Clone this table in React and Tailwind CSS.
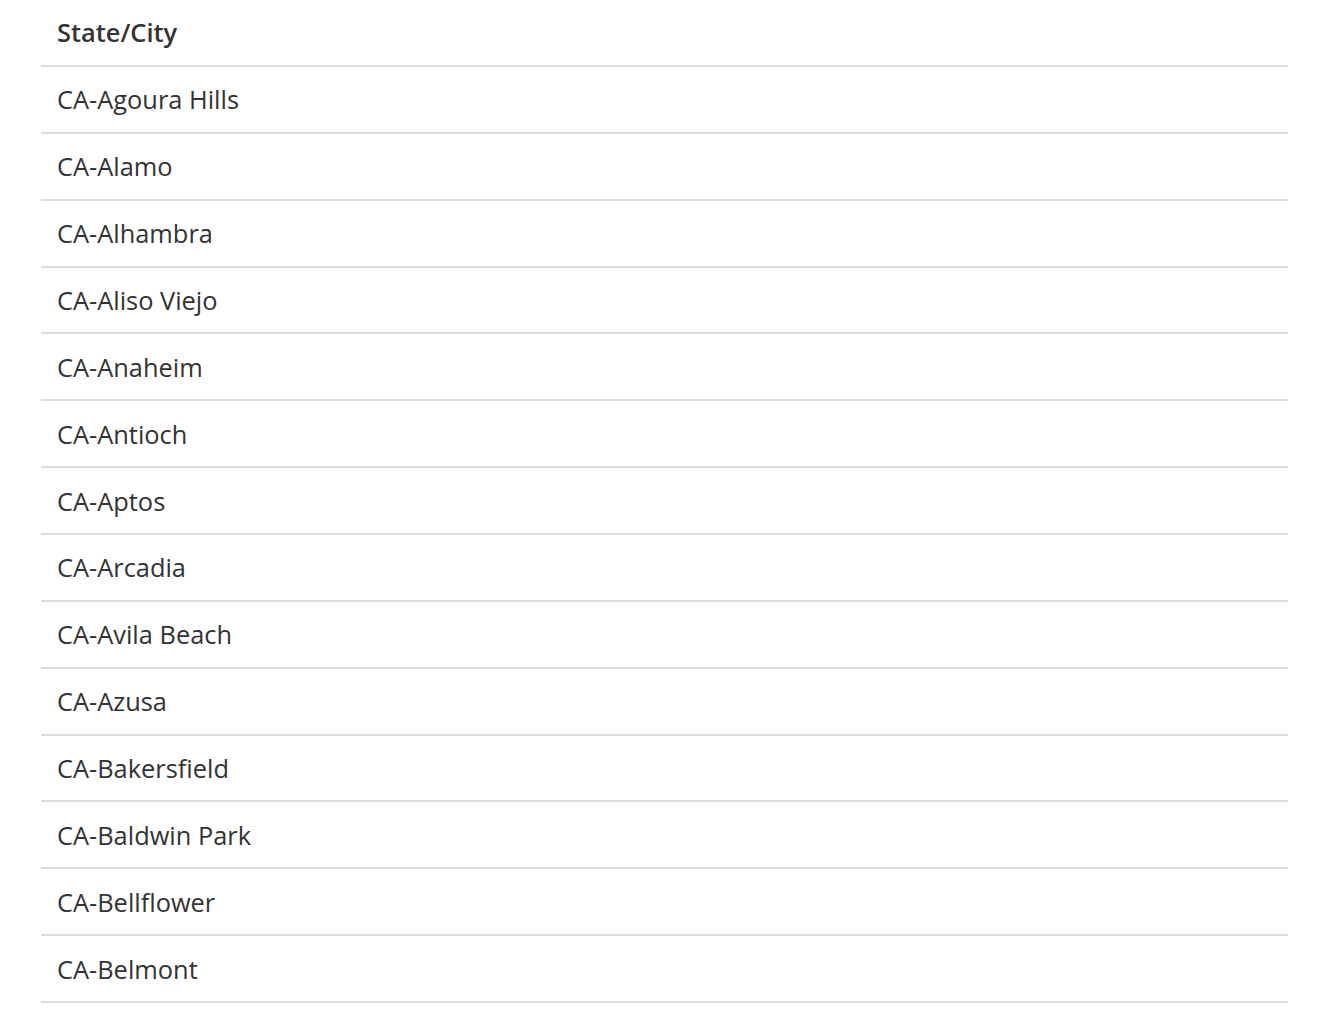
import React from "react";

const cities = [
  "CA-Agoura Hills",
  "CA-Alamo",
  "CA-Alhambra",
  "CA-Aliso Viejo",
  "CA-Anaheim",
  "CA-Antioch",
  "CA-Aptos",
  "CA-Arcadia",
  "CA-Avila Beach",
  "CA-Azusa",
  "CA-Bakersfield",
  "CA-Baldwin Park",
  "CA-Bellflower",
  "CA-Belmont",
];

const App = () => {
  return (
    <div className="bg-white min-h-[1031px] px-[41px] text-[#333] font-['Open_Sans',sans-serif]">
      <table className="w-[1247px] border-collapse">
        <thead>
          <tr className="border-b-2 border-[#ddd]">
            <th className="h-[66px] px-4 text-left align-middle text-[25.4px] font-semibold">
              State/City
            </th>
          </tr>
        </thead>
        <tbody>
          {cities.map((city) => (
            <tr key={city} className="border-b-2 border-[#ddd]">
              <td className="h-[66.86px] px-4 align-middle text-[25.4px]">{city}</td>
            </tr>
          ))}
        </tbody>
      </table>
    </div>
  );
};

export default App;
